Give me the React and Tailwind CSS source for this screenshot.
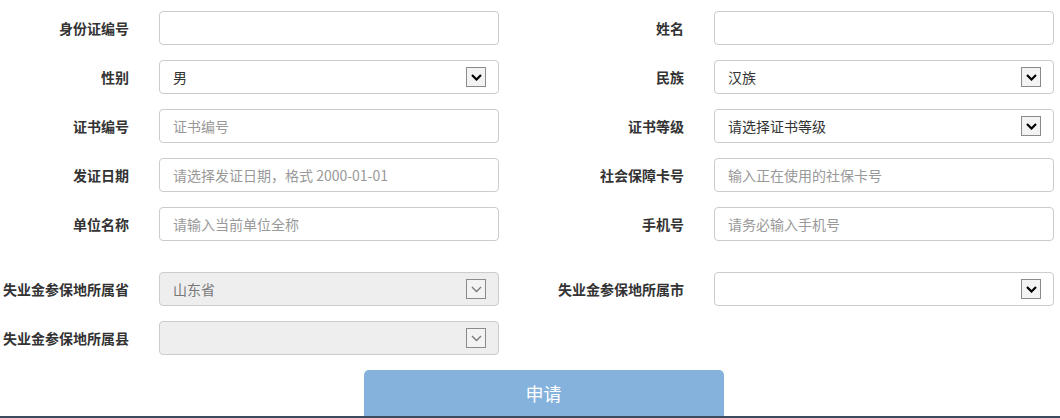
const FONT = { fontFamily: '"Noto Sans CJK SC", "Noto Sans", sans-serif' }

function Arrow({ disabled }) {
  return (
    <span className="absolute right-[12px] top-1/2 -translate-y-1/2 flex h-[20px] w-[20px] items-center justify-center border border-[#8a8a8a] bg-[#f3f3f3]">
      <svg width="11" height="7" viewBox="0 0 11 7">
        <path
          d="M1 1 L5.5 5.5 L10 1"
          fill="none"
          stroke={disabled ? '#7a7a7a' : '#000'}
          strokeWidth={disabled ? 1.4 : 2.2}
        />
      </svg>
    </span>
  )
}

function Field({ label, value, placeholder, select, disabled }) {
  return (
    <div className="flex items-center">
      <div className="w-[129px] shrink-0 text-right text-[14px] font-bold text-[#333]">{label}</div>
      <div
        className={
          'relative ml-[30px] flex h-[34px] w-[340px] items-center rounded-[4px] border border-[#cccccc] px-[13px] text-[14px] ' +
          (disabled ? 'bg-[#eeeeee] text-[#777]' : 'bg-white text-[#333]')
        }
      >
        {value ? <span>{value}</span> : <span className="text-[#999]">{placeholder}</span>}
        {select && <Arrow disabled={disabled} />}
      </div>
    </div>
  )
}

export default function App() {
  return (
    <div className="relative h-[418px] w-[1060px] overflow-hidden bg-white" style={FONT}>
      <div className="grid grid-cols-[555px_1fr] gap-y-[15px] pt-[11px]">
        <Field label="身份证编号" />
        <Field label="姓名" />
        <Field label="性别" value="男" select />
        <Field label="民族" value="汉族" select />
        <Field label="证书编号" placeholder="证书编号" />
        <Field label="证书等级" value="请选择证书等级" select />
        <Field label="发证日期" placeholder="请选择发证日期，格式 2000-01-01" />
        <Field label="社会保障卡号" placeholder="输入正在使用的社保卡号" />
        <Field label="单位名称" placeholder="请输入当前单位全称" />
        <Field label="手机号" placeholder="请务必输入手机号" />
        <div className="mt-[16px]">
          <Field label="失业金参保地所属省" value="山东省" select disabled />
        </div>
        <div className="mt-[16px]">
          <Field label="失业金参保地所属市" select />
        </div>
        <Field label="失业金参保地所属县" select disabled />
      </div>
      <div className="mt-[15px] flex justify-center pl-[27px]">
        <button className="flex h-[50px] w-[360px] items-start justify-center rounded-[5px] bg-[#84b2dc] pt-[10px] text-[18px] text-white">
          申请
        </button>
      </div>
      <div className="absolute bottom-0 left-0 h-[2px] w-full bg-[#3c4b5e]" />
    </div>
  )
}
